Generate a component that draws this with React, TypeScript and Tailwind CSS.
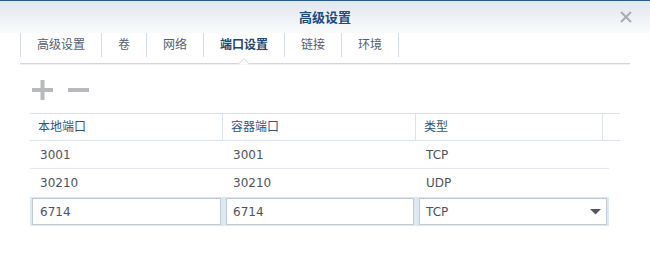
import React from "react";

const tabs = ["高级设置", "卷", "网络", "端口设置", "链接", "环境"];

const rows = [
  { a: "3001", b: "3001", c: "TCP" },
  { a: "30210", b: "30210", c: "UDP" },
];

export default function App() {
  return (
    <div
      className="w-[650px] h-[257px] bg-white overflow-hidden relative"
      style={{ fontFamily: '"DejaVu Sans", "Noto Sans CJK SC", sans-serif' }}
    >
      {/* Title bar */}
      <div className="relative h-[33px] border-t border-[#2a5a96] bg-gradient-to-b from-[#e1e7ef] to-[#fafbfc] flex items-center justify-center">
        <span className="text-[13px] font-bold text-[#1d4a80] leading-none">高级设置</span>
        <svg
          className="absolute right-[18px] top-[10px]"
          width="12"
          height="12"
          viewBox="0 0 12 12"
        >
          <path d="M1 1 L11 11 M11 1 L1 11" stroke="#a9adb2" strokeWidth="2" />
        </svg>
      </div>

      {/* Tabs */}
      <div className="relative mx-5 h-[31px] border-b border-[#d4d7db] shadow-[0_1px_0_#eef0f2]">
        <div className="flex h-[24px]">
          {tabs.map((t, i) => (
            <div
              key={t}
              className={`flex items-center px-4 border-l border-[#d3dbe4] text-[12px] leading-none ${
                i === tabs.length - 1 ? "border-r" : ""
              } ${i === 3 ? "font-bold text-[#23466f]" : "text-[#566070]"}`}
            >
              {t}
            </div>
          ))}
        </div>
        <svg
          className="absolute left-[218px] top-[25px]"
          width="12"
          height="7"
          viewBox="0 0 12 7"
        >
          <path d="M0 6.5 L6 0.5 L12 6.5 Z" fill="#ffffff" />
          <path d="M0 6.5 L6 0.5 L12 6.5" fill="none" stroke="#d4d7db" strokeWidth="1" />
        </svg>
      </div>

      {/* Toolbar */}
      <div className="flex items-center gap-[15px] pl-[32px] mt-[16px] h-[20px]">
        <svg width="21" height="20" viewBox="0 0 21 20">
          <rect x="0" y="8" width="21" height="4" fill="#b6b9be" />
          <rect x="8.5" y="0" width="4" height="20" fill="#b6b9be" />
        </svg>
        <svg width="21" height="20" viewBox="0 0 21 20">
          <rect x="0" y="8" width="21" height="4" fill="#b6b9be" />
        </svg>
      </div>

      {/* Table */}
      <div className="ml-[30px] mt-[13px] text-[12px]">
        {/* Header */}
        <div className="flex w-[590px] h-[28px] border-y border-[#dde3ea] text-[#34547b]">
          <div className="w-[193px] border-r border-[#dde3ea] pl-2 flex items-center">本地端口</div>
          <div className="w-[193px] border-r border-[#dde3ea] pl-2 flex items-center">容器端口</div>
          <div className="w-[187px] border-r border-[#dde3ea] pl-2 flex items-center">类型</div>
          <div className="flex-1" />
        </div>
        {/* Rows */}
        {rows.map((r, i) => (
          <div
            key={i}
            className={`flex w-[579px] h-[28px] text-[#4e545b] ${
              i === 0 ? "border-b border-[#e3e8ee]" : ""
            }`}
          >
            <div className="w-[193px] pl-[10px] flex items-center">{r.a}</div>
            <div className="w-[193px] pl-[10px] flex items-center">{r.b}</div>
            <div className="w-[193px] pl-[10px] flex items-center">{r.c}</div>
          </div>
        ))}
        {/* Edit row */}
        <div className="flex w-[579px] h-[29px] bg-[#dde8f5] pt-[1px] text-[#4e545b]">
          <div className="w-[193px] pl-[2px] pr-[2px]">
            <div className="h-[27px] border border-[#c2cad5] bg-white pl-[7px] flex items-center">6714</div>
          </div>
          <div className="w-[193px] pl-[3px] pr-[2px]">
            <div className="h-[27px] border border-[#c2cad5] bg-white pl-[6px] flex items-center">6714</div>
          </div>
          <div className="w-[193px] pl-[3px] pr-[2px]">
            <div className="h-[27px] border border-[#c2cad5] bg-white pl-[6px] pr-[5px] flex items-center justify-between">
              <span>TCP</span>
              <svg width="11" height="6" viewBox="0 0 11 6">
                <path d="M0 0 L11 0 L5.5 5.5 Z" fill="#50575f" />
              </svg>
            </div>
          </div>
        </div>
      </div>
    </div>
  );
}
